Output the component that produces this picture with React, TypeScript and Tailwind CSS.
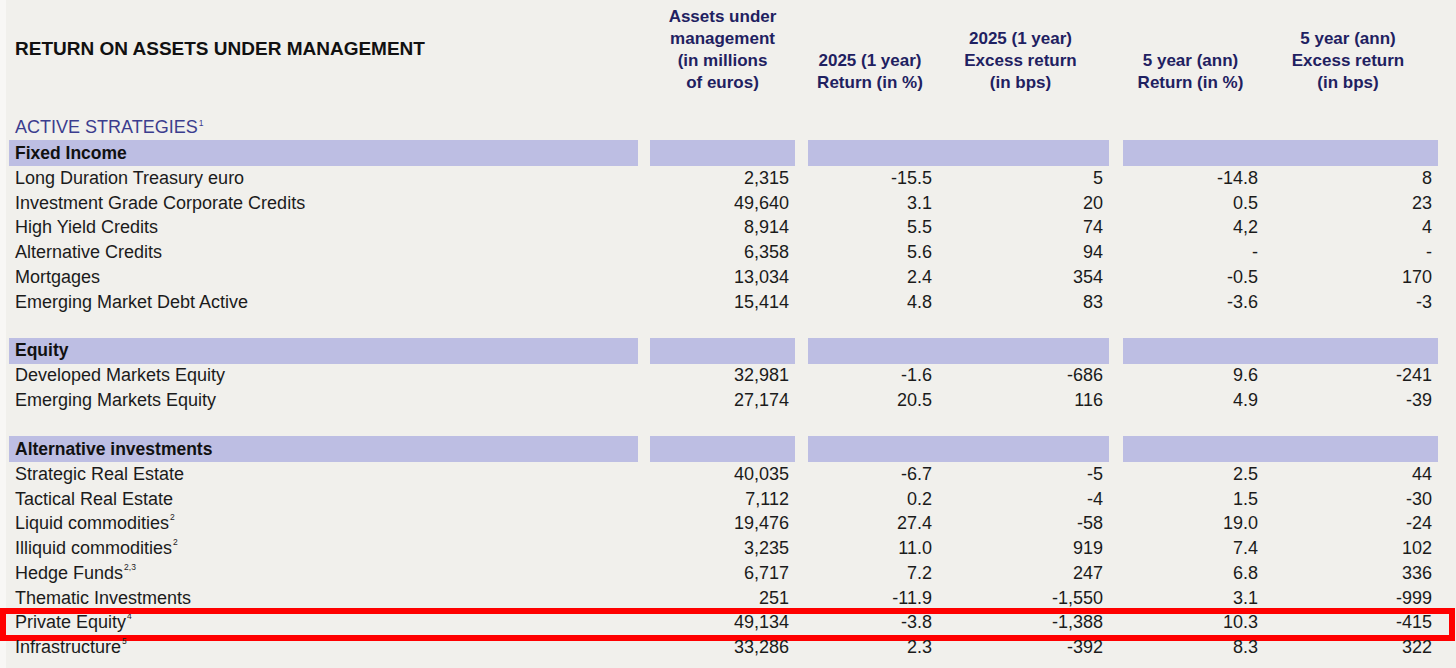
import React from "react"

type Row = {
  label: string
  sup?: string
  aum: string
  r1: string
  x1: string
  r5: string
  x5: string
  highlight?: boolean
}

const fixedIncome: Row[] = [
  { label: "Long Duration Treasury euro", aum: "2,315", r1: "-15.5", x1: "5", r5: "-14.8", x5: "8" },
  { label: "Investment Grade Corporate Credits", aum: "49,640", r1: "3.1", x1: "20", r5: "0.5", x5: "23" },
  { label: "High Yield Credits", aum: "8,914", r1: "5.5", x1: "74", r5: "4,2", x5: "4" },
  { label: "Alternative Credits", aum: "6,358", r1: "5.6", x1: "94", r5: "-", x5: "-" },
  { label: "Mortgages", aum: "13,034", r1: "2.4", x1: "354", r5: "-0.5", x5: "170" },
  { label: "Emerging Market Debt Active", aum: "15,414", r1: "4.8", x1: "83", r5: "-3.6", x5: "-3" },
]

const equity: Row[] = [
  { label: "Developed Markets Equity", aum: "32,981", r1: "-1.6", x1: "-686", r5: "9.6", x5: "-241" },
  { label: "Emerging Markets Equity", aum: "27,174", r1: "20.5", x1: "116", r5: "4.9", x5: "-39" },
]

const alternatives: Row[] = [
  { label: "Strategic Real Estate", aum: "40,035", r1: "-6.7", x1: "-5", r5: "2.5", x5: "44" },
  { label: "Tactical Real Estate", aum: "7,112", r1: "0.2", x1: "-4", r5: "1.5", x5: "-30" },
  { label: "Liquid commodities", sup: "2", aum: "19,476", r1: "27.4", x1: "-58", r5: "19.0", x5: "-24" },
  { label: "Illiquid commodities", sup: "2", aum: "3,235", r1: "11.0", x1: "919", r5: "7.4", x5: "102" },
  { label: "Hedge Funds", sup: "2,3", aum: "6,717", r1: "7.2", x1: "247", r5: "6.8", x5: "336" },
  { label: "Thematic Investments", aum: "251", r1: "-11.9", x1: "-1,550", r5: "3.1", x5: "-999" },
  { label: "Private Equity", sup: "4", aum: "49,134", r1: "-3.8", x1: "-1,388", r5: "10.3", x5: "-415", highlight: true },
  { label: "Infrastructure", sup: "5", aum: "33,286", r1: "2.3", x1: "-392", r5: "8.3", x5: "322" },
]

const bar = "bg-[#bdbee3]"

function SectionBar({ title }: { title: string }) {
  return (
    <div className="flex h-[26px]">
      <div className={`w-[629px] ${bar} flex items-center pl-[6px] font-bold text-[17.5px] text-[#111]`}>{title}</div>
      <div className={`ml-[12px] w-[145px] ${bar}`} />
      <div className={`ml-[13px] w-[301px] ${bar}`} />
      <div className={`ml-[14px] w-[315px] ${bar}`} />
    </div>
  )
}

function DataRow({ row }: { row: Row }) {
  return (
    <div className="relative flex h-[24.75px] items-center text-[#1b1b1b]">
      <div className="w-[629px] pl-[6px] text-[18px]">
        {row.label}
        {row.sup && <sup className="ml-[1px] text-[8.5px] align-[5px]">{row.sup}</sup>}
      </div>
      <div className="ml-[12px] w-[145px] pr-[6px] text-right text-[18px]">{row.aum}</div>
      <div className="ml-[13px] flex w-[301px] text-[18px]">
        <div className="w-[124px] text-right">{row.r1}</div>
        <div className="flex-1 pr-[6px] text-right">{row.x1}</div>
      </div>
      <div className="ml-[14px] flex w-[315px] text-[18px]">
        <div className="w-[135px] text-right">{row.r5}</div>
        <div className="flex-1 pr-[6px] text-right">{row.x5}</div>
      </div>
      {row.highlight && (
        <div className="pointer-events-none absolute -left-[9px] right-[1px] -top-[3px] -bottom-[6px] border-[6px] border-[#ff0000]" />
      )}
    </div>
  )
}

function ColHead({ lines, className }: { lines: string[]; className: string }) {
  return (
    <div className={`flex flex-col items-center text-center font-bold text-[17px] leading-[22px] text-[#1f2161] ${className}`}>
      {lines.map((l) => (
        <div key={l}>{l}</div>
      ))}
    </div>
  )
}

export default function App() {
  return (
    <div
      className="relative min-h-[668px] w-full border-l-[6px] border-[#f8f7f5] bg-[#f1f0ec] pl-[3px]"
      style={{ fontFamily: '"Liberation Sans", Arial, sans-serif' }}
    >
      {/* Header */}
      <div className="flex h-[94px] items-end">
        <div className="w-[629px] self-center pl-[6px] pt-[4px] text-[19px] font-bold text-[#111]">
          RETURN ON ASSETS UNDER MANAGEMENT
        </div>
        <ColHead className="ml-[12px] w-[145px]" lines={["Assets under", "management", "(in millions", "of euros)"]} />
        <div className="ml-[13px] flex w-[301px] items-end">
          <ColHead className="w-[124px]" lines={["2025 (1 year)", "Return (in %)"]} />
          <ColHead className="flex-1" lines={["2025 (1 year)", "Excess return", "(in bps)"]} />
        </div>
        <div className="ml-[14px] flex w-[315px] items-end">
          <ColHead className="w-[135px]" lines={["5 year (ann)", "Return (in %)"]} />
          <ColHead className="flex-1" lines={["5 year (ann)", "Excess return", "(in bps)"]} />
        </div>
      </div>

      <div className="mt-[21px] flex h-[25px] items-center pl-[6px] text-[18px] text-[#3b3d8e]">
        ACTIVE STRATEGIES
        <sup className="ml-[1px] text-[8.5px] align-[5px]">1</sup>
      </div>

      <SectionBar title="Fixed Income" />
      {fixedIncome.map((r) => (
        <DataRow key={r.label} row={r} />
      ))}

      <div className="h-[23px]" />
      <SectionBar title="Equity" />
      {equity.map((r) => (
        <DataRow key={r.label} row={r} />
      ))}

      <div className="h-[23px]" />
      <SectionBar title="Alternative investments" />
      {alternatives.map((r) => (
        <DataRow key={r.label} row={r} />
      ))}
    </div>
  )
}
